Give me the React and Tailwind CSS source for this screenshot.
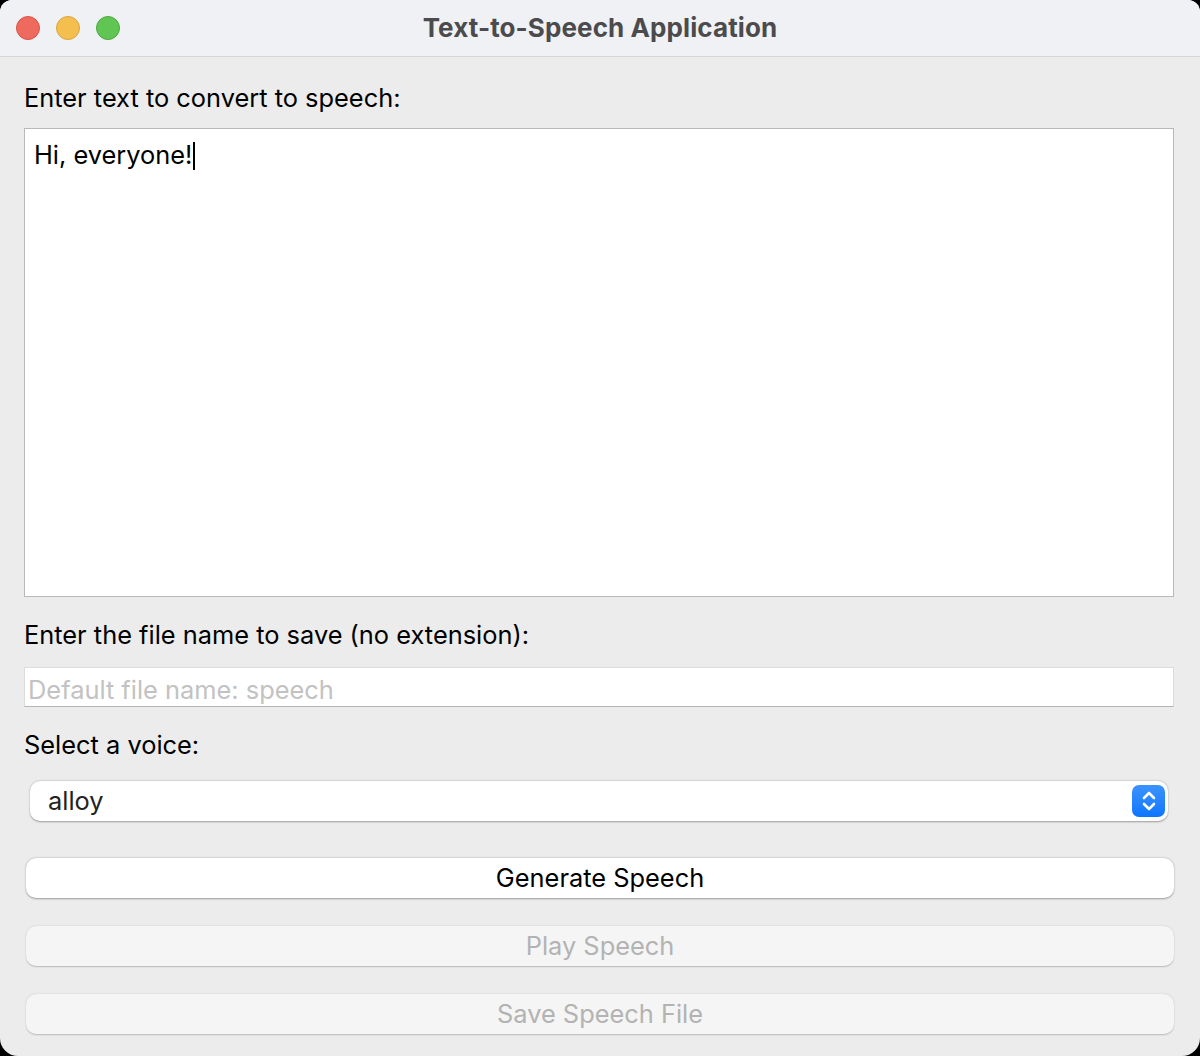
import { useState } from "react";

const TrafficLights = () => (
  <div className="absolute left-[16px] top-[16px] flex gap-[16px]">
    <span className="h-[24px] w-[24px] rounded-full border border-[#d8534a] bg-[#ee6a5f]" />
    <span className="h-[24px] w-[24px] rounded-full border border-[#d9a53c] bg-[#f5bf4f]" />
    <span className="h-[24px] w-[24px] rounded-full border border-[#4ea83f] bg-[#61c554]" />
  </div>
);

const Stepper = () => (
  <span className="flex h-[32px] w-[33px] items-center justify-center rounded-[7px] bg-gradient-to-b from-[#3b93ff] to-[#0a75ff]">
    <svg width="16" height="24" viewBox="0 0 16 24" fill="none" stroke="white" strokeWidth="2.6" strokeLinecap="round" strokeLinejoin="round">
      <path d="M3 9 L8 4 L13 9" />
      <path d="M3 15 L8 20 L13 15" />
    </svg>
  </span>
);

const App = () => {
  const [text, setText] = useState("Hi, everyone!");
  const [fileName, setFileName] = useState("");
  const [voice] = useState("alloy");

  return (
    <div className="h-[1056px] w-[1200px] bg-black font-['Inter',sans-serif]">
      <div className="flex h-full flex-col overflow-hidden rounded-t-[12px] rounded-b-[18px] bg-[#ececec]">
        <div className="relative flex h-[57px] shrink-0 items-center justify-center border-b border-[#d6d6d6] bg-[#f0f1f5] pb-[2px]">
          <TrafficLights />
          <span className="text-[26px] font-bold tracking-[0.1px] text-[#4b4b4d]">
            Text-to-Speech Application
          </span>
        </div>

        <div className="flex flex-col pl-[24px] pr-[26px] pt-[27px]">
          <label className="h-[28px] text-[25.4px] leading-[28px] text-black">
            Enter text to convert to speech:
          </label>
          <div className="relative mt-[16px]">
            <textarea
              value={text}
              onChange={(e) => setText(e.target.value)}
              className="block h-[469px] w-full resize-none border border-[#b9b9b9] bg-white px-[9px] py-[12px] text-[25.4px] leading-[28px] text-black caret-black outline-none"
            />
            {/* caret after the text */}
            <span className="pointer-events-none absolute left-[169px] top-[14px] h-[28px] w-[2px] bg-black" />
          </div>

          <label className="mt-[24px] h-[28px] text-[25.4px] leading-[28px] text-black">
            Enter the file name to save (no extension):
          </label>
          <input
            type="text"
            value={fileName}
            onChange={(e) => setFileName(e.target.value)}
            placeholder="Default file name: speech"
            className="mt-[18px] h-[40px] w-full border border-[#dcdcdc] border-b-[#b5b5b5] bg-white px-[3px] pt-[4px] text-[25.4px] text-black outline-none placeholder:text-[#c2c2c2]"
          />

          <label className="mt-[24px] h-[28px] text-[25.4px] leading-[28px] text-black">
            Select a voice:
          </label>
          <div className="mt-[22px] pl-[6px] pr-[6px]">
            <div className="flex h-[40px] items-center justify-between rounded-[10px] bg-white pl-[18px] pr-[3px] shadow-[0_0.5px_2px_rgba(0,0,0,0.35)]">
              <span className="text-[25.4px] text-[#222]">{voice}</span>
              <Stepper />
            </div>
          </div>

          <div className="mt-[37px] flex flex-col gap-[28px] pl-[2px]">
            <button className="h-[40px] w-full rounded-[10px] bg-white text-[25.4px] text-black shadow-[0_0.5px_2px_rgba(0,0,0,0.35)]">
              Generate Speech
            </button>
            <button disabled className="h-[40px] w-full rounded-[10px] bg-[#f5f5f5] text-[25.4px] text-[#b3b3b3] shadow-[0_0.5px_1.5px_rgba(0,0,0,0.22)]">
              Play Speech
            </button>
            <button disabled className="h-[40px] w-full rounded-[10px] bg-[#f5f5f5] text-[25.4px] text-[#b3b3b3] shadow-[0_0.5px_1.5px_rgba(0,0,0,0.22)]">
              Save Speech File
            </button>
          </div>
        </div>
      </div>
    </div>
  );
};

export default App;
